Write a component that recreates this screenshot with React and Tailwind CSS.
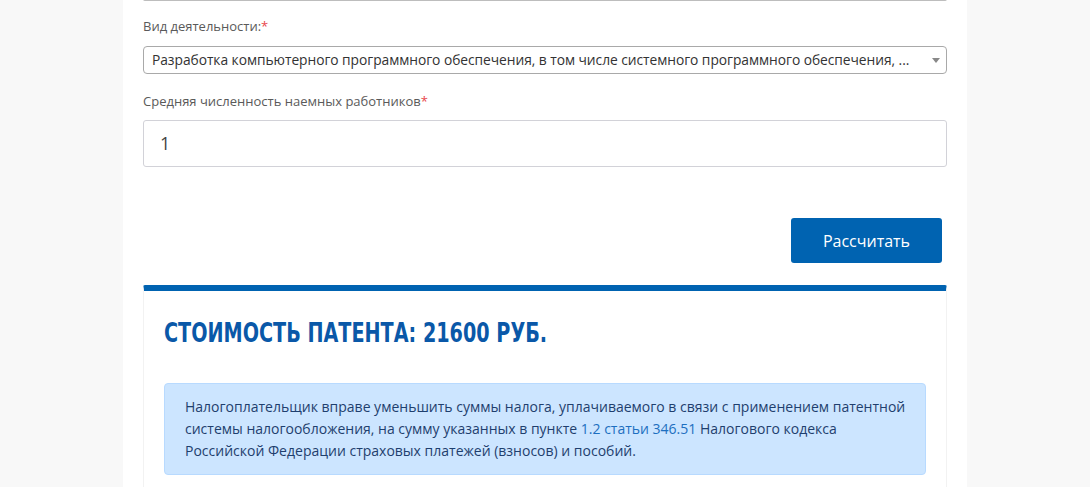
import React from 'react';

const font = { fontFamily: '"Open Sans", "Noto Sans", sans-serif' };

const Label = ({ children }) => (
  <div className="text-[13px] leading-[18px] text-[#5a5a5a]">
    {children}
    <span className="text-[#e8474c]">*</span>
  </div>
);

export default function App() {
  return (
    <div className="min-h-screen bg-[#f8f8f8] flex justify-center overflow-hidden" style={font}>
      <div className="w-[844px] bg-white px-5 pb-10">
        {/* previous field bottom edge */}
        <div className="h-[2px] -mt-[1px] border-b border-[#bdbdbd] rounded-b" />

        <div className="mt-[16px]">
          <Label>Вид деятельности:</Label>
          <div className="mt-[11px] h-[28px] border border-[#a9a9a9] rounded-[4px] flex items-center pl-[8px] pr-[6px]">
            <span className="flex-1 whitespace-nowrap text-[13.8px] tracking-[-0.05px] text-[#333]">
              Разработка компьютерного программного обеспечения, в том числе системного программного обеспечения, ...
            </span>
            <span className="ml-2 w-0 h-0 border-l-[4px] border-r-[4px] border-t-[5px] border-l-transparent border-r-transparent border-t-[#888]" />
          </div>
        </div>

        <div className="mt-[18px]">
          <Label>Средняя численность наемных работников</Label>
          <div className="mt-[10px] h-[47px] border border-[#d2d2d8] rounded-[3px] flex items-center pl-[16px] text-[18px] text-[#444]">
            1
          </div>
        </div>

        <div className="flex justify-end mt-[51px] pr-[5px]">
          <button className="w-[151px] h-[45px] bg-[#0063b1] rounded-[3px] text-white text-[16px]">
            Рассчитать
          </button>
        </div>

        <div className="mt-[22px] border-t-[6px] border-[#0063b1] rounded-t-[2px] border-x border-x-[#f2f2f2] px-5 pb-4">
          <h2
            className="mt-[26px] text-[27px] leading-[32px] font-bold text-[#0a58a8] whitespace-nowrap"
            style={{ fontFamily: '"DejaVu Sans Condensed", "Roboto Condensed", sans-serif', transform: 'scaleX(0.79)', transformOrigin: 'left' }}
          >
            СТОИМОСТЬ ПАТЕНТА: 21600 РУБ.
          </h2>
          <div className="mt-[34px] bg-[#cce5ff] border border-[#b8daff] rounded-[4px] pl-[20px] pr-4 py-[12px] text-[14px] leading-[22px] text-[#1f3f6e]">
            Налогоплательщик вправе уменьшить суммы налога, уплачиваемого в связи с применением патентной системы налогообложения, на сумму указанных в пункте{' '}
            <a className="text-[#1d6fc0]">1.2 статьи 346.51</a> Налогового кодекса<br />
            Российской Федерации страховых платежей (взносов) и пособий.
          </div>
        </div>
      </div>
    </div>
  );
}
